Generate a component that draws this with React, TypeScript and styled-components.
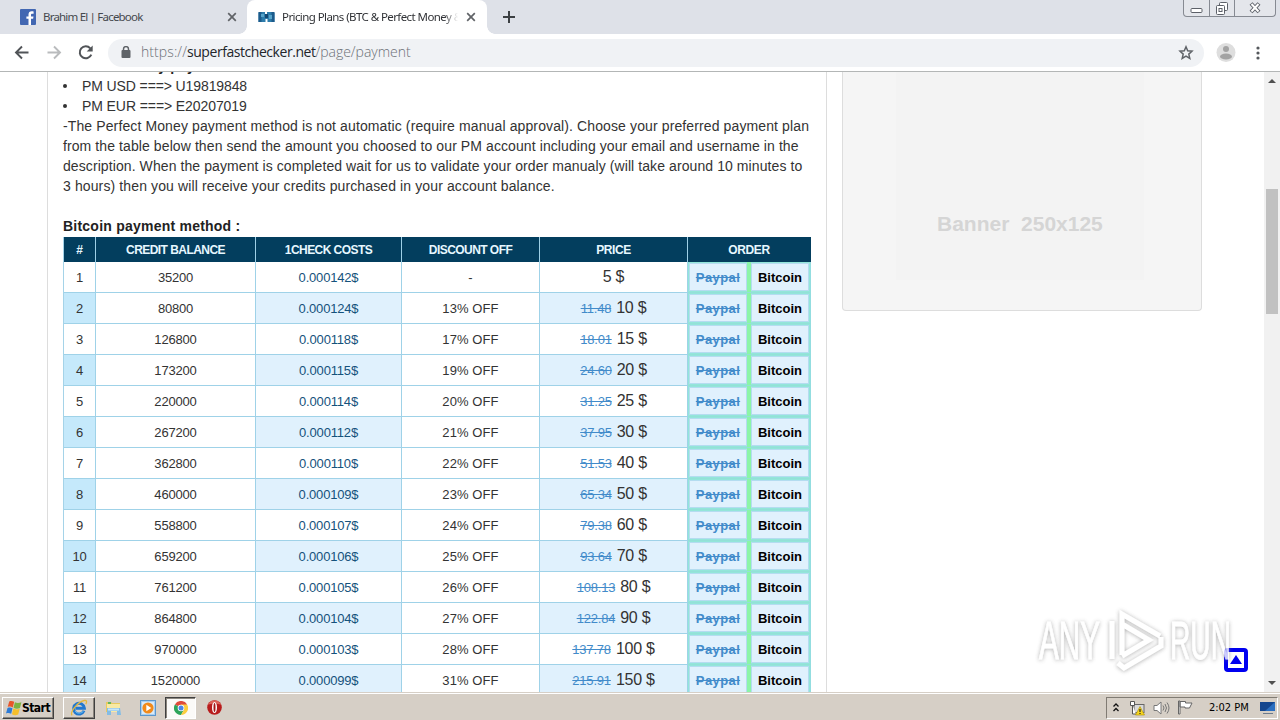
import React from "react";
import styled, { createGlobalStyle } from "styled-components";

const Global = createGlobalStyle`
  * { box-sizing: border-box; }
  body { margin: 0; background: #fff; overflow: hidden; font-family: "Liberation Sans", Arial, sans-serif; }
`;

const Screen = styled.div`
  position: relative; width: 1280px; height: 720px; overflow: hidden;
  display: flex; flex-direction: column; background: #fff;
`;

/* browser chrome */
const TabStrip = styled.div`
  height: 34px; flex: none; background: #dee1e8; display: flex; align-items: stretch;
`;
const Tab = styled.div<{ $active?: boolean; $w: number; $pad: number }>`
  width: ${p => p.$w}px; padding: 0 ${p => (p.$active ? 11 : 10)}px 0 ${p => p.$pad}px;
  display: flex; align-items: center; position: relative;
  background: ${p => (p.$active ? "#fff" : "transparent")};
  border-radius: 8px 8px 0 0;
  color: ${p => (p.$active ? "#303236" : "#45484d")};
  &::before, &::after {
    content: ""; display: ${p => (p.$active ? "block" : "none")};
    position: absolute; bottom: 0; width: 8px; height: 8px;
  }
  &::before { left: -8px; background: radial-gradient(circle at 0 0, transparent 7.5px, #fff 8px); }
  &::after { right: -8px; background: radial-gradient(circle at 100% 0, transparent 7.5px, #fff 8px); }
`;
const TabTitle = styled.span<{ $ls: number; $fade?: boolean }>`
  flex: 1; margin-left: 7px; margin-right: ${p => (p.$fade ? 8 : 12)}px; white-space: nowrap; overflow: hidden;
  font: 11.5px/16px "Noto Sans", sans-serif; letter-spacing: ${p => p.$ls}px;
  ${p => p.$fade && "mask-image: linear-gradient(90deg, #000 92%, transparent);"}
`;
const NewTab = styled.div`width: 44px; display: flex; align-items: center; justify-content: center;`;
const WindowControls = styled.div`
  margin: 0 4px 0 auto; height: 17px; width: 93px; display: flex;
  border: 1px solid #868a92; border-top: 0; border-radius: 0 0 4px 4px; background: #e4e6eb;
`;
const WindowButton = styled.div<{ $w: number }>`
  width: ${p => p.$w}px; display: flex; justify-content: center; align-items: center;
  & + & { border-left: 1px solid #868a92; }
`;
const Toolbar = styled.div`
  height: 38px; flex: none; display: flex; align-items: center; padding: 0 12px;
  border-bottom: 1px solid #b3b6b6; background: #fff;
`;
const NavButton = styled.div`
  width: 20px; height: 20px; margin-right: 12px; display: flex; align-items: center; justify-content: center;
`;
const AddressBar = styled.div`
  width: 1096px; height: 28px; border-radius: 14px; background: #f0f2f5; margin: 0 12px 0 0;
  display: flex; align-items: center; padding: 0 10px 0 13px;
`;
const Url = styled.div`
  margin-left: 10px; flex: 1; display: flex; color: #6c7075; font: 300 14px/20px "Open Sans", sans-serif; white-space: nowrap;
  letter-spacing: 0.15px; margin-top: -2px;
`;
const Host = styled.span`color: #22252a; font-weight: 400; letter-spacing: -0.45px;`;
const UrlPart = styled.span<{ $ls: number }>`letter-spacing: ${p => p.$ls}px;`;
const MenuDots = styled.div`margin-left: 20px; display: flex;`;

/* page */
const Page = styled.div`
  height: 620px; flex: none; display: flex; overflow: hidden; background: #fff;
`;
const Main = styled.div`
  width: 780px; margin-left: 47px; padding: 0 15px; flex: none;
  border-left: 1px solid #ddd; border-right: 1px solid #ddd;
`;
const Prose = styled.div`
  margin-top: -16px; height: 181px; color: #333; font-size: 14px; line-height: 20px;
`;
const Line = styled.div<{ $ls?: number; $bold?: boolean }>`
  height: 20px; white-space: pre; letter-spacing: ${p => p.$ls ?? 0.2}px;
  font-weight: ${p => (p.$bold ? 700 : 400)}; ${p => p.$bold && "color: #222;"}
`;
const Bullet = styled(Line)`
  display: flex; align-items: center;
  &::before { content: ""; width: 4px; height: 4px; border-radius: 50%; background: #333; margin-right: 15px; }
`;
const Table = styled.div`width: 748px; border-left: 1px solid #a5d3e8; font-size: 13px;`;
const columns = "32px 160px 146px 138px 148px 123px";
const HeadRow = styled.div`
  display: grid; grid-template-columns: ${columns}; height: 25px; background: #033e5e;
`;
const HeadCell = styled.div<{ $ls?: number }>`
  display: flex; align-items: center; justify-content: center;
  border-right: 1px solid #9fd0e6; color: #e6f7ff; font-weight: 700; font-size: 12px;
  letter-spacing: ${p => p.$ls ?? -0.55}px;
  &:last-child { border-color: #033e5e; }
`;
const Row = styled.div`
  display: grid; grid-template-columns: ${columns}; height: 31px;
`;
const Cell = styled.div<{ $bg?: string; $color?: string; $ls?: number }>`
  display: flex; align-items: center; justify-content: center; white-space: pre;
  border-right: 1px solid #9fd2e8; border-bottom: 1px solid #9fd2e8;
  background: ${p => p.$bg ?? "#fff"}; color: ${p => p.$color ?? "#333"};
  letter-spacing: ${p => p.$ls ?? -0.18}px;
`;
const PriceCell = styled(Cell)`align-items: baseline; padding-top: 6px; font-size: 16px; letter-spacing: -0.25px;`;
const OldPrice = styled.span`
  font-size: 13px; color: #428bca; text-decoration: line-through; margin-right: 5px; letter-spacing: -0.2px;
`;
const OrderCell = styled.div`
  display: flex; align-items: stretch; padding: 1px; gap: 4px;
  background: linear-gradient(90deg, #93e6d9 0 59px, #8cf5a8 59px 63px, #93e6d9 63px);
  border-right: 1px solid #93dde0; border-bottom: 1px solid #93e0d8;
`;
const OrderButton = styled.div<{ $off?: boolean }>`
  width: 58px; border: 1px solid #b4dcf0; background: #e0f1fd;
  display: flex; align-items: center; justify-content: center; font-weight: 700; font-size: 13px;
  color: ${p => (p.$off ? "#428bca" : "#000")};
  text-decoration: ${p => (p.$off ? "line-through" : "none")};
  letter-spacing: ${p => (p.$off ? 0.4 : 0)}px;
`;
const Sidebar = styled.div`width: 360px; margin-left: 15px; flex: none;`;
const BannerBox = styled.div`
  height: 239px; padding: 0 57px 30px 53px; background: #f5f5f5;
  border: 1px solid #ddd; border-top: 0; border-radius: 0 0 4px 4px;
`;
const Banner = styled.div`
  height: 208px; background: #f3f3f3; padding: 139px 0 0 41px; white-space: pre;
  font: 700 21px/26px "Liberation Sans", Arial, sans-serif; color: #d5d5d5; letter-spacing: 0;
`;
const Scrollbar = styled.div`
  width: 16px; margin-left: auto; background: #f1f1f1; display: flex; flex-direction: column; align-items: center;
`;
const ScrollArrow = styled.div<{ $down?: boolean }>`
  width: 16px; height: 17px; display: flex; align-items: center; justify-content: center;
  ${p => p.$down && "margin-top: auto; transform: rotate(180deg);"}
`;
const Thumb = styled.div`width: 12px; height: 125px; margin-top: 100px; background: #c1c1c1;`;

/* overlays */
const Watermark = styled.div`
  position: absolute; left: 1034px; top: 606px; width: 204px; height: 70px;
`;
const TopLink = styled.div`position: absolute; left: 1224px; top: 648px; width: 24px; height: 24px;`;

/* taskbar */
const Taskbar = styled.div`
  height: 28px; flex: none; background: #d6cfc6; border-top: 1px solid #d6cfc6; box-shadow: inset 0 1px #fff;
  display: flex; align-items: center; padding: 2px 2px 0 2px;
`;
const TaskButton = styled.div<{ $w: number; $ml?: number; $kind?: "raised" | "pressed" }>`
  width: ${p => p.$w}px; margin-left: ${p => p.$ml ?? 0}px; height: 22px; display: flex; align-items: center; justify-content: center;
  border: 1px solid transparent;
  ${p => p.$kind === "raised" && "border-color: #fff #404040 #404040 #fff; box-shadow: inset -1px -1px #8a857d;"}
  ${p => p.$kind === "pressed" && "border-color: #404040 #fff #fff #404040; background: #fbfaf8; box-shadow: inset 1px 1px #8a857d;"}
`;
const StartLabel = styled.span`
  font: 700 12px/16px "DejaVu Sans Condensed", "DejaVu Sans", sans-serif; letter-spacing: -0.5px; color: #000;
`;
const Tray = styled.div`
  margin-left: auto; width: 172px; height: 22px; display: flex; align-items: center; padding: 0 1px 0 6px;
  border: 1px solid; border-color: #807b73 #fff #fff #807b73;
`;
const Clock = styled.span`
  margin-left: 15px; width: 42px; white-space: nowrap; color: #000;
  font: 11px/14px "DejaVu Sans Condensed", "DejaVu Sans", sans-serif; letter-spacing: 0;
`;
const TrayIcon = styled.div<{ $ml: number }>`margin-left: ${p => p.$ml}px; display: flex;`;

const Close = () => (
  <svg width="10" height="10" viewBox="0 0 10 10"><path d="M1.200 1.200 8.800 8.800M8.800 1.200 1.200 8.800" stroke="#606367" strokeWidth="1.700" /></svg>
);
const Facebook = () => (
  <svg width="16" height="16" viewBox="0 0 16 16"><rect width="16" height="16" rx="1" fill="#4267b2" /><path d="M11 16V9.800h2.100l.4-2.400H11V5.900c0-.8.3-1.200 1.300-1.200h1.300V2.500C13.200 2.400 12.500 2.300 11.700 2.300 9.700 2.300 8.500 3.500 8.500 5.600v1.800H6.400v2.400h2.100V16z" fill="#fff" /></svg>
);
const Binoculars = () => (
  <svg width="17" height="12" viewBox="0 0 17 12">
    <path d="M1 1h6v2h2V1h6l1.500 1v9H9.500V8h-2v3H.5V2z" fill="#2d7cab" />
    <path d="M.5 1h3v10h-3zM13.500 1h3v10h-3z" fill="#1c5b8b" /><path d="M3 3h3v3H3zM11 4h3v4h-3z" fill="#58a5cb" /><path d="M7 3h3v4H7z" fill="#144873" />
  </svg>
);
const StartFlag = () => (
  <svg width="16" height="16" viewBox="0 0 16 16">
    <path d="M3.200 1.400C4.800.6 6.500.8 8.200 1.800L6.800 7.400C5.200 6.500 3.500 6.300 1.700 7.100z" fill="#e8562a" />
    <path d="M8.900 2.300c1.900 1 3.700 1.100 6.500 0L14 8c-2.400 1-4.500.8-6.500-.2z" fill="#7cb342" />
    <path d="M1.500 8c1.800-.8 3.400-.6 5 .2L5.200 13.700C3.600 12.800 1.900 12.600 0 13.400z" fill="#2d7bd6" />
    <path d="M7.300 8.600c1.900.9 3.900 1.200 6.400.2l-1.500 5.700c-2.500 1-4.400.8-6.200-.3z" fill="#f5bf2c" />
  </svg>
);
const Explorer = () => (
  <svg width="18" height="18" viewBox="0 0 18 18">
    <path d="M14 11.800A5.400 5.400 0 1 1 14.400 9.200H5.500" fill="none" stroke="#2278cf" strokeWidth="2.900" />
    <path d="M13.800 11.600A5.200 5.200 0 0 1 5 12" fill="none" stroke="#65bcf0" strokeWidth="1" />
    <path d="M2.200 16.300C-.5 14 7 3.200 14.200 1.500c3-.6 2.600 1.700 1.600 3.600" fill="none" stroke="#e5b83c" strokeWidth="1.300" />
  </svg>
);
const Folder = () => (
  <svg width="17" height="16" viewBox="0 0 17 16">
    <path d="M1 2h5l1 1h8v9H1z" fill="#e9c95f" /><path d="M2 4h13v8H2z" fill="#f8e9a4" /><path d="M3 2h3v2H3z" fill="#64b75b" />
    <path d="M2 8h13l1 7h-4v-4H6v4H2z" fill="#83bce5" /><path d="M3 8.500h11v2H3z" fill="#c6e6f8" />
  </svg>
);
const Media = () => (
  <svg width="16" height="16" viewBox="0 0 16 16">
    <rect x=".5" y=".5" width="15" height="15" fill="#a9cff0" stroke="#5b97cd" /><rect x="2" y="2" width="12" height="12" fill="#d9ebf9" />
    <circle cx="8" cy="8" r="5.600" fill="#f18a1b" /><path d="M6.300 4.800 11.300 8l-5 3.200z" fill="#fff" />
  </svg>
);
const ChromeIcon = () => (
  <svg width="14" height="14" viewBox="0 0 14 14">
    <path d="M7 7 .9 3.500A7 7 0 0 1 13.100 3.500z" fill="#df4b3c" /><path d="M7 7 .9 3.500A7 7 0 0 0 7 14l3-5.200z" fill="#2da45a" />
    <path d="M7 7l3 1.800L7 14A7 7 0 0 0 13.100 3.500H7z" fill="#fbcd3f" /><circle cx="7" cy="7" r="3.300" fill="#fff" /><circle cx="7" cy="7" r="2.500" fill="#4b86e8" />
  </svg>
);
const Opera = () => (
  <svg width="15" height="15" viewBox="0 0 15 15">
    <circle cx="7.500" cy="7.500" r="7.300" fill="#b81c1c" /><path d="M1 5a7 7 0 0 1 13 0C10 3 5 3 1 5z" fill="#dc6258" />
    <ellipse cx="7.500" cy="7.500" rx="2.500" ry="5.500" fill="#fff" /><ellipse cx="7.500" cy="7.500" rx="1" ry="4.500" fill="#a31616" />
  </svg>
);

const rows: [string, string, string, string, string][] = [
  ["35200", "0.000142$", "-", "", "5 $"],
  ["80800", "0.000124$", "13% OFF", "11.48", "10 $"],
  ["126800", "0.000118$", "17% OFF", "18.01", "15 $"],
  ["173200", "0.000115$", "19% OFF", "24.60", "20 $"],
  ["220000", "0.000114$", "20% OFF", "31.25", "25 $"],
  ["267200", "0.000112$", "21% OFF", "37.95", "30 $"],
  ["362800", "0.000110$", "22% OFF", "51.53", "40 $"],
  ["460000", "0.000109$", "23% OFF", "65.34", "50 $"],
  ["558800", "0.000107$", "24% OFF", "79.38", "60 $"],
  ["659200", "0.000106$", "25% OFF", "93.64", "70 $"],
  ["761200", "0.000105$", "26% OFF", "108.13", "80 $"],
  ["864800", "0.000104$", "27% OFF", "122.84", "90 $"],
  ["970000", "0.000103$", "28% OFF", "137.78", "100 $"],
  ["1520000", "0.000099$", "31% OFF", "215.91", "150 $"],
];

export default function App() {
  return (
    <Screen>
      <Global />
      <TabStrip>
        <Tab $w={247} $pad={20}>
          <Facebook /><TabTitle $ls={-0.8}>Brahim El | Facebook</TabTitle><Close />
        </Tab>
        <Tab $active $w={240} $pad={11}>
          <Binoculars /><TabTitle $ls={-0.58} $fade>Pricing Plans (BTC &amp; Perfect Money &amp; Bitcoin)</TabTitle><Close />
        </Tab>
        <NewTab><svg width="12" height="12"><path d="M6 0v12M0 6h12" stroke="#3c4043" strokeWidth="2" /></svg></NewTab>
        <WindowControls>
          <WindowButton $w={25}><svg width="13" height="16"><rect x="1" y="8.500" width="11" height="4" rx="1" fill="#fff" stroke="#5c6068" /></svg></WindowButton>
          <WindowButton $w={25}>
            <svg width="14" height="16" fill="#fff" stroke="#5c6068"><rect x="4.500" y="2.500" width="8" height="8" rx="1" /><rect x="1.500" y="5.500" width="8" height="9" rx="1" /><rect x="4" y="8.500" width="3" height="3" /></svg>
          </WindowButton>
          <WindowButton $w={41}>
            <svg width="12" height="16"><path d="M2 3.500l8 8.500M10 3.500 2 12" stroke="#5c6068" strokeWidth="4" /><path d="M2.500 4l7 7.500M9.500 4l-7 7.500" stroke="#fff" strokeWidth="2" /></svg>
          </WindowButton>
        </WindowControls>
      </TabStrip>
      <Toolbar>
        <NavButton><svg width="16" height="16" fill="none" stroke="#515458" strokeWidth="1.900"><path d="M14.500 7.500H2M8 1.500 2 7.500 8 13.500" /></svg></NavButton>
        <NavButton><svg width="16" height="16" fill="none" stroke="#b9bbbd" strokeWidth="1.900"><path d="M1.500 7.500H14M8 1.500 14 7.500 8 13.500" /></svg></NavButton>
        <NavButton><svg width="16" height="16"><path d="M13.300 9.700A6 6 0 1 1 12.300 3.400" fill="none" stroke="#515458" strokeWidth="2" /><path d="M14.700.5v6h-6z" fill="#515458" /></svg></NavButton>
        <AddressBar>
          <svg width="10" height="13"><rect x=".5" y="4" width="9" height="8" rx="1" fill="#5f6368" /><path d="M2.500 4.500V3.100a2.500 2.500 0 0 1 5 0V4.500" fill="none" stroke="#5f6368" strokeWidth="1.500" /></svg>
          <Url><UrlPart $ls={0.08}>https://</UrlPart><Host>superfastchecker.net</Host><UrlPart $ls={-0.03}>/page/payment</UrlPart></Url>
          <svg width="16" height="16" viewBox="0 0 16 16"><path d="M8 1.800l1.700 4 4.300.4-3.200 2.900 1 4.300L8 11.200l-3.800 2.200 1-4.300L2 6.200l4.300-.4z" fill="none" stroke="#5f6368" strokeWidth="1.500" /></svg>
        </AddressBar>
        <svg width="20" height="20"><circle cx="10" cy="9.500" r="9.500" fill="#dedede" /><circle cx="10" cy="6" r="3" fill="#a3a3a3" /><ellipse cx="10" cy="13.500" rx="6" ry="3" fill="#a3a3a3" /></svg>
        <MenuDots><svg width="4" height="14"><g fill="#55585c"><circle cx="2" cy="2" r="1.600" /><circle cx="2" cy="7" r="1.600" /><circle cx="2" cy="12" r="1.600" /></g></svg></MenuDots>
      </Toolbar>
      <Page>
        <Main>
          <Prose>
            <Line $bold>-Perfect Money payment method :</Line>
            <Bullet $ls={-0.11}>PM USD ===&gt; U19819848</Bullet>
            <Bullet $ls={-0.09}>PM EUR ===&gt; E20207019</Bullet>
            <Line $ls={0.116}>-The Perfect Money payment method is not automatic (require manual approval). Choose your preferred payment plan</Line>
            <Line $ls={0.092}>from the table below then send the amount you choosed to our PM account including your email and username in the</Line>
            <Line $ls={0.087}>description. When the payment is completed wait for us to validate your order manualy (will take around 10 minutes to</Line>
            <Line $ls={0.118}>3 hours) then you will receive your credits purchased in your account balance.</Line>
            <Line> </Line>
            <Line $ls={0.23} $bold>Bitcoin payment method :</Line>
          </Prose>
          <Table>
            <HeadRow>
              {["#", "CREDIT BALANCE", "1CHECK COSTS", "DISCOUNT OFF", "PRICE", "ORDER"].map(h => (
                <HeadCell key={h} $ls={h.length < 6 ? -0.4 : undefined}>{h}</HeadCell>
              ))}
            </HeadRow>
            {rows.map(([credits, cost, off, old, price], i) => {
              const even = i % 2 === 1;
              return (
                <Row key={credits}>
                  <Cell $bg={even ? "#c5e9fb" : "#fff"}>{i + 1}</Cell>
                  <Cell>{credits}</Cell>
                  <Cell $bg={even ? "#e0f1fd" : "#fff"} $color="#15527c">{cost}</Cell>
                  <Cell $ls={0.1}>{off}</Cell>
                  <PriceCell $bg={even ? "#e0f1fd" : "#fff"}>{old && <OldPrice>{old}</OldPrice>}{price}</PriceCell>
                  <OrderCell><OrderButton $off>Paypal</OrderButton><OrderButton>Bitcoin</OrderButton></OrderCell>
                </Row>
              );
            })}
          </Table>
        </Main>
        <Sidebar><BannerBox><Banner>Banner  250x125</Banner></BannerBox></Sidebar>
        <Scrollbar>
          <ScrollArrow><svg width="8" height="4"><path d="M0 4 4 0l4 4z" fill="#505050" /></svg></ScrollArrow>
          <Thumb />
          <ScrollArrow $down><svg width="8" height="4"><path d="M0 4 4 0l4 4z" fill="#505050" /></svg></ScrollArrow>
        </Scrollbar>
      </Page>
      <Taskbar>
        <TaskButton $w={52} $kind="raised"><StartFlag /><StartLabel>Start</StartLabel></TaskButton>
        <TaskButton $w={32} $ml={9} $kind="raised"><Explorer /></TaskButton>
        <TaskButton $w={36}><Folder /></TaskButton>
        <TaskButton $w={34}><Media /></TaskButton>
        <TaskButton $w={31} $kind="pressed"><ChromeIcon /></TaskButton>
        <TaskButton $w={36}><Opera /></TaskButton>
        <Tray>
          <svg width="6" height="9" fill="none" stroke="#111" strokeWidth="1.300"><path d="M.5 3.500 3 1l2.500 2.500M.5 8 3 5.500 5.500 8" /></svg>
          <TrayIcon $ml={10}>
            <svg width="17" height="16"><rect x="5" y="4.500" width="10" height="8" fill="#d9d9d9" stroke="#666" /><path d="M1.500 1.500h4v4h-4zM3.500 5v9H7" fill="#fff" stroke="#555" /><path d="M6.500 15 11 6.500l4.500 8.500z" fill="#f7d51d" stroke="#a78b00" strokeWidth=".6" /><path d="M11 9v3M11 13v1" stroke="#222" strokeWidth="1.200" /></svg>
          </TrayIcon>
          <TrayIcon $ml={7}>
            <svg width="17" height="14" fill="none" stroke="#777"><path d="M1 4.500h3L8 1v12L4 9.500H1z" fill="#fff" /><path d="M10 4.500q2 2.500 0 5M12 3q3 4 0 8M14 1.500q4 5.500 0 11" /></svg>
          </TrayIcon>
          <TrayIcon $ml={7}>
            <svg width="17" height="15" stroke="#666" fill="#fff"><path d="M1.500 14V1h1.500v13zM3 1.500h5.500v1.500H15L12.500 8H8V7H3z" /></svg>
          </TrayIcon>
          <Clock>2:02 PM</Clock>
          <TrayIcon $ml={10}>
            <svg width="16" height="14"><path d="M0 1h15v9H0z" fill="#2b6fc0" /><path d="M0 1h15L5 10H0z" fill="#14468e" /><path d="M3 12h10v1H3z" fill="#6c7a8c" /></svg>
          </TrayIcon>
        </Tray>
      </Taskbar>
      <TopLink>
        <svg width="24" height="24"><rect x="2" y="2" width="20" height="20" rx="2" fill="#fff" stroke="#0000f0" strokeWidth="4" /><path d="M6 16l6-9 6 9z" fill="#0000f0" /></svg>
      </TopLink>
      <Watermark>
        <svg width="204" height="70" viewBox="0 0 204 70">
          <defs>
            <filter id="soft" x="-10%" y="-10%" width="120%" height="120%"><feDropShadow dx="0" dy="0.500" stdDeviation="2" floodColor="#777" floodOpacity=".75" /></filter>
          </defs>
          <g filter="url(#soft)" opacity=".8" fontFamily="Liberation Sans Narrow, Liberation Sans" fontSize="53" fill="#fff">
            <text x="5" y="53" textLength="61" lengthAdjust="spacingAndGlyphs" stroke="#fff" strokeWidth=".8">ANY</text>
            <text x="136" y="53" textLength="61" lengthAdjust="spacingAndGlyphs" stroke="#fff" strokeWidth=".8">RUN</text>
            <path d="M78 15v38M88 49V8l38 22M88 18l27 16-27 16M84 57l6 5 37-22V31" fill="none" stroke="#fff" strokeWidth="5" />
          </g>
        </svg>
      </Watermark>
    </Screen>
  );
}
